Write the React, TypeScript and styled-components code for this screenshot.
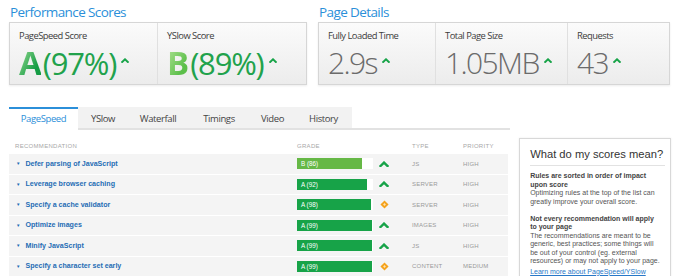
import React from "react";
import styled, { createGlobalStyle } from "styled-components";

const GlobalStyle = createGlobalStyle`
  html, body {
    margin: 0;
    padding: 0;
    background: #fff;
  }
  body {
    font-family: "Liberation Sans", Arial, sans-serif;
  }
`;

const scores = [
  { label: "PageSpeed Score", grade: "A", pct: "(97%)", from: "#a6e29a", to: "#169c45", w: 148 },
  { label: "YSlow Score", grade: "B", pct: "(89%)", from: "#b5e59a", to: "#5cbf4a", w: 148 },
];

const details = [
  { label: "Fully Loaded Time", value: "2.9s", w: 117 },
  { label: "Total Page Size", value: "1.05MB", w: 132 },
  { label: "Requests", value: "43", w: 101 },
];

const tabs = [
  { name: "PageSpeed", w: 69 },
  { name: "YSlow", w: 50 },
  { name: "Waterfall", w: 60 },
  { name: "Timings", w: 62 },
  { name: "Video", w: 45 },
  { name: "History", w: 57 },
];

type Rec = {
  title: string;
  grade: string;
  score: number;
  icon: "up" | "diamond";
  type: string;
  priority: string;
};

const recs: Rec[] = [
  { title: "Defer parsing of JavaScript", grade: "B", score: 86, icon: "up", type: "JS", priority: "HIGH" },
  { title: "Leverage browser caching", grade: "A", score: 92, icon: "up", type: "SERVER", priority: "HIGH" },
  { title: "Specify a cache validator", grade: "A", score: 98, icon: "diamond", type: "SERVER", priority: "HIGH" },
  { title: "Optimize images", grade: "A", score: 99, icon: "up", type: "IMAGES", priority: "HIGH" },
  { title: "Minify JavaScript", grade: "A", score: 99, icon: "up", type: "JS", priority: "HIGH" },
  { title: "Specify a character set early", grade: "A", score: 99, icon: "diamond", type: "CONTENT", priority: "MEDIUM" },
];

const Caret: React.FC<{ size?: number }> = ({ size = 8 }) => (
  <svg width={size} height={size * 0.6} viewBox="0 0 10 6">
    <polyline points="1.5,5 5,1.6 8.5,5" fill="none" stroke="#17a348" strokeWidth="2.4" strokeLinecap="square" />
  </svg>
);

const Diamond = () => (
  <svg width="9" height="9" viewBox="0 0 10 10">
    <rect x="1.8" y="1.8" width="6.4" height="6.4" transform="rotate(45 5 5)" fill="#f5a21b" />
    <rect x="3.9" y="3.9" width="2.2" height="2.2" transform="rotate(45 5 5)" fill="#fde3b0" />
  </svg>
);

const App: React.FC = () => {
  return (
    <>
      <GlobalStyle />
      <Page>
        <TopRow>
          <Section $w={298}>
            <Heading>Performance Scores</Heading>
            <ScoreBox>
              {scores.map((s) => (
                <Cell key={s.label} $w={s.w}>
                  <Label>{s.label}</Label>
                  <Value>
                    <Grade $from={s.from} $to={s.to}>{s.grade}</Grade>
                    <Pct>{s.pct}</Pct>
                    <CaretWrap>
                      <Caret />
                    </CaretWrap>
                  </Value>
                </Cell>
              ))}
            </ScoreBox>
          </Section>
          <Section $w={352}>
            <Heading>Page Details</Heading>
            <ScoreBox>
              {details.map((d) => (
                <Cell key={d.label} $w={d.w}>
                  <Label>{d.label}</Label>
                  <Value>
                    <Plain>{d.value}</Plain>
                    <CaretWrap>
                      <Caret />
                    </CaretWrap>
                  </Value>
                </Cell>
              ))}
            </ScoreBox>
          </Section>
        </TopRow>

        <Main>
          <LeftCol>
            <TabBar>
              {tabs.map((t, i) => (
                <Tab key={t.name} $w={t.w} $active={i === 0}>
                  {t.name}
                </Tab>
              ))}
              <TabFill />
            </TabBar>
            <Table>
              <HeadRow>
                <span>Recommendation</span>
                <span>Grade</span>
                <span>Type</span>
                <span>Priority</span>
              </HeadRow>
              {recs.map((r) => (
                <Row key={r.title}>
                  <RecTitle>
                    <Arrow>▼</Arrow>
                    {r.title}
                  </RecTitle>
                  <GradeCell>
                    <BarTrack>
                      <Bar $light={r.grade === "B"} style={{ width: `${r.score}%` }}>
                        {r.grade} ({r.score})
                      </Bar>
                    </BarTrack>
                    <IconSlot>{r.icon === "up" ? <Caret size={10} /> : <Diamond />}</IconSlot>
                  </GradeCell>
                  <Meta>{r.type}</Meta>
                  <Meta>{r.priority}</Meta>
                </Row>
              ))}
            </Table>
          </LeftCol>

          <Panel>
            <PanelTitle>What do my scores mean?</PanelTitle>
            <Para>
              <strong>Rules are sorted in order of impact upon score</strong>
              Optimizing rules at the top of the list can greatly improve your overall score.
            </Para>
            <Para>
              <strong>Not every recommendation will apply to your page</strong>
              The recommendations are meant to be generic, best practices; some things will be out of
              your control (eg. external resources) or may not apply to your page.
            </Para>
            <PanelLink href="#">Learn more about PageSpeed/YSlow</PanelLink>
          </Panel>
        </Main>
      </Page>
    </>
  );
};

const Page = styled.div`
  width: 680px;
  height: 276px;
  box-sizing: border-box;
  padding: 4px 9px 0 9px;
  overflow: hidden;
`;

const TopRow = styled.div`
  display: flex;
  gap: 11px;
`;

const Section = styled.section<{ $w: number }>`
  width: ${(p) => p.$w}px;
`;

const Heading = styled.h2`
  margin: 0 0 2px 1px;
  height: 16px;
  font: 400 13.5px/16px "Open Sans", sans-serif;
  letter-spacing: -0.6px;
  color: #2b8fd9;
`;

const ScoreBox = styled.div`
  display: flex;
  height: 61px;
  border: 1px solid #d6d6d6;
  background: linear-gradient(#fbfbfb, #ececec);
  box-shadow: 0 1px 2px rgba(0, 0, 0, 0.08);
`;

const Cell = styled.div<{ $w: number }>`
  width: ${(p) => p.$w}px;
  box-sizing: border-box;
  padding: 7px 0 0 9px;
  border-right: 1px solid #e0e0e0;

  &:last-child {
    border-right: none;
    flex: 1;
  }
`;

const Label = styled.div`
  font: 400 9.4px/12px "Open Sans", sans-serif;
  letter-spacing: -0.5px;
  color: #3c3c3c;
`;

const Value = styled.div`
  display: flex;
  align-items: center;
  margin-top: 2px;
  height: 38px;
`;

const Grade = styled.span<{ $from: string; $to: string }>`
  font: 700 33px/38px "Open Sans", sans-serif;
  letter-spacing: -1px;
  background: linear-gradient(120deg, ${(p) => p.$from}, ${(p) => p.$to} 70%);
  -webkit-background-clip: text;
  background-clip: text;
  color: transparent;
`;

const Pct = styled.span`
  font: 400 31px/38px "Open Sans", sans-serif;
  letter-spacing: -1.2px;
  color: #21a24c;
  margin-left: 2px;
`;

const Plain = styled.span`
  font: 300 30px/38px "Open Sans", sans-serif;
  letter-spacing: -1.6px;
  color: #6b6b6b;
`;

const CaretWrap = styled.span`
  display: inline-flex;
  margin-left: 5px;
  margin-top: -5px;
`;

const Main = styled.div`
  display: flex;
  margin-top: 22px;
`;

const LeftCol = styled.div`
  width: 509px;
`;

const TabBar = styled.div`
  display: flex;
  height: 23px;
`;

const Tab = styled.div<{ $w: number; $active: boolean }>`
  width: ${(p) => p.$w}px;
  box-sizing: border-box;
  display: flex;
  align-items: center;
  justify-content: center;
  font: 400 9.5px "Open Sans", sans-serif;
  letter-spacing: -0.4px;
  color: ${(p) => (p.$active ? "#2b8fd9" : "#444")};
  background: ${(p) => (p.$active ? "#fff" : "#f2f2f2")};
  border-top: 2px solid ${(p) => (p.$active ? "#2b8fd9" : "#f2f2f2")};
  border-bottom: 2px solid ${(p) => (p.$active ? "#fff" : "#e2e2e2")};
`;

const TabFill = styled.div`
  flex: 1;
  border-bottom: 2px solid #e2e2e2;
`;

const Table = styled.div`
  width: 499px;
  padding-top: 9px;
`;

const columns = "282px 115px 51px 1fr";

const HeadRow = styled.div`
  display: grid;
  grid-template-columns: ${columns};
  align-items: center;
  height: 14px;
  padding-left: 6px;
  margin-bottom: 1px;
  font: 400 6px "Liberation Sans", Arial, sans-serif;
  letter-spacing: 0.3px;
  text-transform: uppercase;
  color: #a8a8a8;
`;

const Row = styled.div`
  display: grid;
  grid-template-columns: ${columns};
  align-items: center;
  height: 19.5px;
  margin-bottom: 1px;
  padding-left: 6px;
  background: #f4f4f4;
`;

const RecTitle = styled.div`
  display: flex;
  align-items: center;
  font: 700 7.1px "Liberation Sans", Arial, sans-serif;
  color: #1f6db4;
`;

const Arrow = styled.span`
  font-size: 4.5px;
  color: #1f6db4;
  margin: 0 5px 0 1px;
`;

const GradeCell = styled.div`
  display: flex;
  align-items: center;
`;

const BarTrack = styled.div`
  width: 76px;
  height: 11px;
  background: #fff;
`;

const Bar = styled.div<{ $light: boolean }>`
  height: 100%;
  box-sizing: border-box;
  padding-left: 4px;
  display: flex;
  align-items: center;
  background: ${(p) => (p.$light ? "#66b846" : "#17a348")};
  font: 400 6.3px "Liberation Sans", Arial, sans-serif;
  color: #fff;
  white-space: nowrap;
`;

const IconSlot = styled.span`
  display: inline-flex;
  justify-content: center;
  width: 10px;
  margin-left: 6px;
`;

const Meta = styled.div`
  font: 400 6px "Liberation Sans", Arial, sans-serif;
  letter-spacing: 0.2px;
  color: #9a9a9a;
`;

const Panel = styled.aside`
  width: 154px;
  height: 160px;
  box-sizing: border-box;
  margin: 31px 0 0 9px;
  padding: 9px 5px 0 10px;
  border: 1px solid #d8d8d8;
  box-shadow: 0 0 2px rgba(0, 0, 0, 0.08);
  background: #fff;
`;

const PanelTitle = styled.div`
  font: 400 11.2px/13px "Liberation Sans", Arial, sans-serif;
  color: #333;
  white-space: nowrap;
  padding-bottom: 4px;
  border-bottom: 1px solid #e2e2e2;
  margin-bottom: 6px;
`;

const Para = styled.p`
  margin: 0 0 8.5px;
  max-width: 131px;
  font: 400 7px/8.5px "Liberation Sans", Arial, sans-serif;
  color: #555;

  strong {
    display: block;
    color: #444;
  }

  & + & {
    margin-bottom: 2px;
  }
`;

const PanelLink = styled.a`
  display: block;
  font: 400 7px/8.5px "Liberation Sans", Arial, sans-serif;
  color: #2878c8;
`;

export default App;
